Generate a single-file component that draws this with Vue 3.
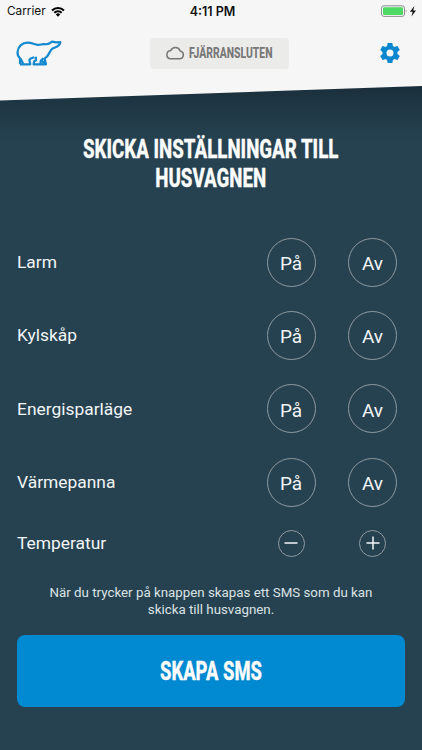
<template>
  <div class="screen">
    <header class="header">
      <div class="status-bar">
        <div class="carrier">
          <span>Carrier</span>
          <svg class="wifi" viewBox="0 0 14 11">
            <path d="M0.3 3.7a9.6 9.6 0 0 1 13.4 0l-1.4 1.5a7.6 7.6 0 0 0-10.6 0z" />
            <path d="M2.6 6.1a6.3 6.3 0 0 1 8.8 0L10 7.6a4.3 4.3 0 0 0-6 0z" />
            <path d="M4.8 8.4a3.1 3.1 0 0 1 4.4 0L7 10.7z" />
          </svg>
        </div>
        <div class="clock">4:11 PM</div>
        <div class="battery">
          <svg viewBox="0 0 36 13">
            <rect x="0.5" y="0.8" width="23" height="10.6" rx="2.4" fill="none" stroke="#8f8f8f" />
            <rect x="2" y="2.3" width="20" height="7.6" rx="1.2" fill="#4cd964" />
            <path d="M24.8 4.5q1.5 1.6 0 3.2z" fill="#777" />
            <path d="M33.4 1 28.9 6.8h2.8l-1.3 4.7L35 5.600h-2.8z" fill="#111" />
          </svg>
        </div>
      </div>
      <div class="toolbar">
        <svg class="bear" viewBox="0 0 44 28">
          <path d="M4 25.300V19.200C1.900 17.300 1.300 15 1.600 12.600 2.200 7.200 6.300 3.600 11.600 3.600c4.400 0 6.700 2.100 10.400 2.300 2.600.1 3.800-.9 6.300-.7 2.700.2 4.200.2 5.600-1L36 2.700l4 .7 4.300-.2-.6 2L41.700 7.200l-5.500 2.600C34 11.800 33.200 15.200 30.800 17.700c-.9.900-1.800 1.300-2.200 1.900L30 25.300H17.500l.8-3 1.600-.9V17.800M4.500 19.500l2.600 5M4 25.300h10.300L13.300 20.800c1.200-1.600 2.900-1.700 5-2.600M24.300 25l.6-3.500 2.500-2.300M26 21.500l2.500 3.300" />
        </svg>
        <div class="connection">
          <svg class="cloud" viewBox="0 0 20 14">
            <path d="M5.200 12.800h9.300a4 4 0 0 0 .7-7.900A5.100 5.100 0 0 0 5.700 4.600 4.150 4.150 0 0 0 5.200 12.800z" />
          </svg>
          <svg class="connection-text" viewBox="0 0 84 18">
            <text x="0" y="13.900" textLength="83.500" lengthAdjust="spacingAndGlyphs">FJÄRRANSLUTEN</text>
          </svg>
        </div>
        <svg class="gear" viewBox="2 2 20 20">
          <path d="M19.430 12.980c.04-.32.07-.64.07-.98s-.03-.66-.07-.98l2.110-1.650c.19-.15.24-.42.12-.64l-2-3.460c-.12-.22-.39-.3-.61-.22l-2.490 1c-.52-.4-1.080-.73-1.690-.98l-.38-2.650C14.460 2.180 14.250 2 14 2h-4c-.25 0-.46.18-.49.42l-.38 2.650c-.61.25-1.170.59-1.690.98l-2.490-1c-.23-.09-.49 0-.61.22l-2 3.460c-.13.22-.07.49.12.64l2.110 1.650c-.04.32-.07.65-.07.98s.03.66.07.98l-2.110 1.650c-.19.15-.24.42-.12.64l2 3.460c.12.22.39.3.61.22l2.490-1c.52.4 1.080.73 1.690.98l.38 2.650c.03.24.24.42.49.42h4c.25 0 .46-.18.49-.42l.38-2.650c.61-.25 1.170-.59 1.690-.98l2.490 1c.23.09.49 0 .61-.22l2-3.460c.12-.22.07-.49-.12-.64zM12 15.500a3.500 3.500 0 1 1 0-7 3.500 3.500 0 0 1 0 7z" />
        </svg>
      </div>
    </header>

    <main class="content">
      <h1 class="title">
        <svg viewBox="0 0 388 68">
          <text x="193.700" y="29" text-anchor="middle" textLength="255.500" lengthAdjust="spacingAndGlyphs">SKICKA INSTÄLLNINGAR TILL</text>
          <text x="193.700" y="58" text-anchor="middle" textLength="111" lengthAdjust="spacingAndGlyphs">HUSVAGNEN</text>
        </svg>
      </h1>

      <div v-for="item in settings" :key="item" class="row">
        <span class="label">{{ item }}</span>
        <button class="round" :class="{ active: state[item] === true }" @click="state[item] = true">På</button>
        <button class="round" :class="{ active: state[item] === false }" @click="state[item] = false">Av</button>
      </div>

      <div class="row temperature">
        <span class="label">Temperatur</span>
        <button class="round small" @click="temperature--">
          <svg viewBox="0 0 14 14"><path d="M0.500 7h13" /></svg>
        </button>
        <button class="round small" @click="temperature++">
          <svg viewBox="0 0 14 14"><path d="M0.500 7h13M7 .5v13" /></svg>
        </button>
      </div>

      <p class="hint">När du trycker på knappen skapas ett SMS som du kan<br />skicka till husvagnen.</p>

      <button class="submit">
        <svg viewBox="0 0 102 34">
          <text x="0" y="25.500" textLength="102" lengthAdjust="spacingAndGlyphs">SKAPA SMS</text>
        </svg>
      </button>
    </main>
  </div>
</template>

<script setup>
import { reactive, ref } from 'vue'

const settings = ['Larm', 'Kylskåp', 'Energisparläge', 'Värmepanna']

const state = reactive({})
const temperature = ref(20)
</script>

<style>
body {
  margin: 0;
  background: #264250;
}
</style>

<style scoped>
.screen {
  width: 422px;
  height: 750px;
  overflow: hidden;
  background: linear-gradient(#1a2e3a 86px, #1e3643 102px, #264250 142px);
  font-family: Roboto, sans-serif;
  color: #f1f5f7;
}

button {
  padding: 0;
  border: 0;
  background: none;
  color: inherit;
  font-family: inherit;
}

svg {
  display: block;
  overflow: visible;
}

svg text {
  font-family: Roboto, sans-serif;
  font-weight: 800;
}

/* sned underkant */
.header {
  height: 101px;
  background: #f6f6f6;
  clip-path: polygon(0 0, 100% 0, 100% 86px, 0 100.500px);
}

.status-bar {
  display: grid;
  grid-template-columns: 1fr auto 1fr;
  align-items: center;
  height: 22px;
  padding: 0 5px 0 7px;
  font-family: Inter, sans-serif;
  color: #111;
}

.carrier {
  display: flex;
  align-items: center;
  gap: 5px;
  font-size: 11.800px;
}

.wifi {
  width: 14px;
  height: 11px;
}

.clock {
  padding-left: 1px;
  font-size: 12.500px;
  font-weight: 600;
}

.battery {
  justify-self: end;
}

.battery svg {
  width: 36px;
  height: 13px;
}

.toolbar {
  display: flex;
  align-items: center;
  justify-content: space-between;
  height: 62px;
  padding: 0 22px 0 16px;
}

.bear {
  width: 44px;
  height: 28px;
  fill: none;
  stroke: #1489cf;
  stroke-width: 2.200;
  stroke-linejoin: round;
}

.connection {
  display: flex;
  align-items: center;
  box-sizing: border-box;
  width: 139px;
  height: 31px;
  margin-right: 1px;
  padding-left: 15px;
  gap: 4px;
  border-radius: 4px;
  background: #ebebea;
}

.cloud {
  width: 20px;
  height: 14px;
  fill: none;
  stroke: #777;
  stroke-width: 1.500;
}

.connection-text {
  width: 84px;
  height: 18px;
}

.connection-text text {
  font-size: 13.800px;
  fill: #777;
}

.gear {
  width: 20px;
  height: 20px;
  fill: #0b87cf;
}

.content {
  padding: 0 17px;
}

.title {
  margin: 28px 0 0;
}

.title svg {
  width: 388px;
  height: 68px;
}

.title text,
.submit text {
  font-size: 25.500px;
  fill: #fafbfb;
  stroke: #fafbfb;
  stroke-width: 0.300;
}

.row {
  display: grid;
  grid-template-columns: 1fr 49px 49px;
  column-gap: 32.500px;
  align-items: center;
  height: 73.300px;
  padding-right: 8px;
}

.title + .row {
  margin-top: 28.500px;
}

.label {
  font-size: 17.400px;
}

.round {
  display: flex;
  align-items: center;
  justify-content: center;
  justify-self: center;
  box-sizing: border-box;
  width: 49px;
  height: 49px;
  padding-top: 3px;
  border: 1px solid #8f9a9f;
  border-radius: 50%;
  font-size: 19px;
}

.round.active {
  background: #0189d1;
  border-color: #0189d1;
}

.round.small {
  width: 27px;
  height: 27px;
  padding: 0;
}

.small svg {
  width: 14px;
  height: 14px;
  stroke: #f1f5f7;
  stroke-width: 1.500;
}

.temperature {
  height: 49px;
}

.hint {
  margin: 16px 0 0;
  font-size: 13.320px;
  line-height: 17.500px;
  text-align: center;
  color: #dbe2e6;
}

.submit {
  display: flex;
  align-items: center;
  justify-content: center;
  width: 100%;
  height: 72px;
  margin-top: 16px;
  border-radius: 8px;
  background: #0189d1;
}

.submit svg {
  width: 102px;
  height: 34px;
}
</style>
